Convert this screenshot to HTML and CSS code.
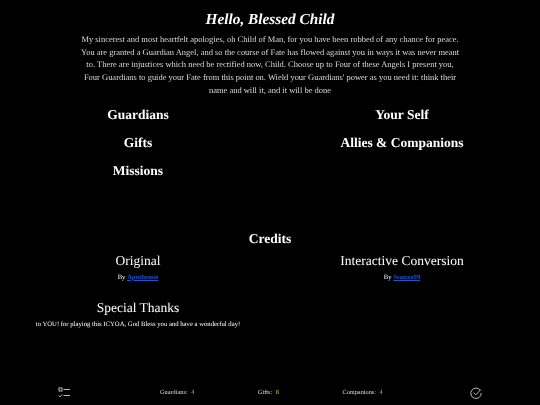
FILE: index.html
```html
<!DOCTYPE html>
<html lang="en">
<head>
  <meta charset="UTF-8" />
  <title>Hello, Blessed Child</title>
  <link rel="stylesheet" href="styles.css">
</head>
<body>
  <div class="page">
    <div class="container">
      <h1 class="title">Hello, Blessed Child</h1>
      <p class="intro">My sincerest and most heartfelt apologies, oh Child of Man, for you have been robbed of any chance for peace. You are granted a Guardian Angel, and so the course of Fate has flowed against you in ways it was never meant to. There are injustices which need be rectified now, Child. Choose up to Four of these Angels I present you, Four Guardians to guide your Fate from this point on. Wield your Guardians' power as you need it: think their name and will it, and it will be done</p>

      <div class="menu">
        <h2>Guardians</h2>
        <h2>Your Self</h2>
        <h2>Gifts</h2>
        <h2>Allies &amp; Companions</h2>
        <h2>Missions</h2>
      </div>

      <h2 class="credits-title">Credits</h2>
      <div class="credits">
        <div class="credit">
          <h3>Original</h3>
          <p>By <a href="#">Apotheosis</a></p>
        </div>
        <div class="credit">
          <h3>Interactive Conversion</h3>
          <p>By <a href="#">Scanxo99</a></p>
        </div>
        <div class="credit">
          <h3>Special Thanks</h3>
          <p>to YOU! for playing this ICYOA, God Bless you and have a wonderful day!</p>
        </div>
      </div>
    </div>

    <div class="footer">
      <svg class="icon" viewBox="0 0 12 12" width="12" height="12">
        <rect x="1" y="1" width="3" height="3"></rect>
        <path d="M5.5 2.5H12M5.5 8.5H12M.8 8.5l1.2 1.4 2.2-2.6"></path>
      </svg>
      <span class="stat first">Guardians: <b>4</b></span>
      <span class="stat">Gifts: <b>8</b></span>
      <span class="stat">Companions: <b>4</b></span>
      <svg class="icon check" viewBox="0 0 12 12" width="12" height="12">
        <path d="M10.2 3.2A5.2 5.2 0 1 0 11.2 6"></path>
        <path d="M3.6 5.6l2.2 2.2 5-5.2"></path>
      </svg>
    </div>
  </div>
</body>
</html>
```

FILE: styles.css
```css
* {
  margin: 0;
  padding: 0;
  box-sizing: border-box;
}

html, body {
  height: 100%;
  overflow: hidden;
  background: #000;
  color: #fff;
  font-family: 'Liberation Serif', serif;
  text-rendering: geometricPrecision;
}

.page {
  height: 100%;
  display: flex;
  flex-direction: column;
  justify-content: space-between;
  filter: blur(0.3px);
}

.container {
  width: 528px;
  margin: 0 auto;
  padding-top: 11px;
  text-align: center;
}

.title {
  font-size: 15.3px;
  line-height: 18px;
  font-style: italic;
  font-weight: bold;
}

.intro {
  width: 380px;
  margin: 4px auto 0;
  font-size: 8.47px;
  line-height: 12.7px;
  color: #ddd;
}

.menu {
  display: grid;
  grid-template-columns: 1fr 1fr;
  margin-top: 4px;
}

.menu h2 {
  font-size: 13.5px;
  line-height: 16px;
  padding: 6px 0;
  height: 28px;
  font-weight: bold;
}

.credits-title {
  margin-top: 46px;
  font-size: 13.5px;
  line-height: 16px;
  font-weight: bold;
}

.credits {
  display: grid;
  grid-template-columns: 1fr 1fr;
  margin-top: 5px;
}

.credit {
  height: 47px;
}

.credit h3 {
  font-size: 13.5px;
  line-height: 17px;
  font-weight: normal;
}

.credit p {
  margin-top: 4px;
  font-size: 6.7px;
  line-height: 9px;
}

.credit a {
  color: #1a56c8;
  font-weight: bold;
}

.footer {
  display: flex;
  align-items: center;
  height: 25px;
  padding: 0 58px;
  font-size: 6.3px;
  color: #ddd;
}

.stat {
  margin-left: 63.5px;
}

.stat.first {
  margin-left: 90px;
}

.stat b {
  margin-left: 2px;
  color: #d4b84a;
  font-weight: normal;
}

.icon {
  fill: none;
  stroke: #bbb;
  stroke-width: 1;
}

.check {
  margin-left: auto;
}
```
